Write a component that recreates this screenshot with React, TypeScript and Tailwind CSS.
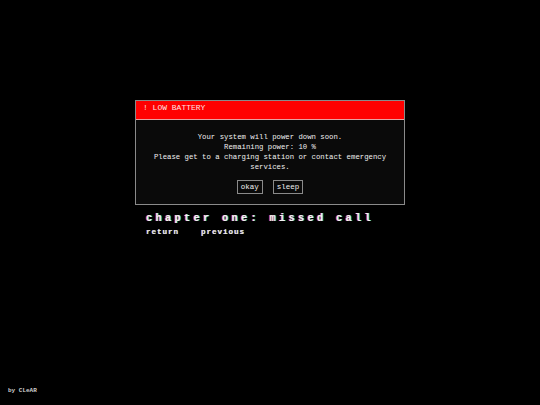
import React from "react";

const mono = { fontFamily: '"Liberation Mono", "DejaVu Sans Mono", monospace' };

const App: React.FC = () => {
    return (
        <div className="w-[540px] h-[405px] bg-black text-white relative overflow-hidden" style={mono}>
            <div className="flex flex-col items-center pt-[100px]">
                <div className="w-[270px] border border-[#8a8a8a] bg-[#0a0a0a]">
                    <div className="h-[19px] bg-[#ff0000] border-b border-[#e8a0a0] px-[7px] pt-[2px] text-[8px] leading-[10px] text-[#ffe0e0]">
                        ! LOW BATTERY
                    </div>
                    <div className="flex flex-col items-center pt-[12px] pb-[10px]">
                        <p className="text-[7.3px] leading-[10px] text-center text-[#f0f0f0] w-[244px]">
                            Your system will power down soon.
                            <br />
                            Remaining power: 10 %
                            <br />
                            Please get to a charging station or contact emergency services.
                        </p>
                        <div className="flex gap-[10px] mt-[8px]">
                            <button className="h-[14px] px-[3px] border border-[#8a8a8a] text-[7.5px] leading-[10px] text-[#f0f0f0]">
                                okay
                            </button>
                            <button className="h-[14px] px-[3px] border border-[#8a8a8a] text-[7.5px] leading-[10px] text-[#f0f0f0]">
                                sleep
                            </button>
                        </div>
                    </div>
                </div>
                <div className="w-[270px] pl-[11px] mt-[8px]">
                    <div
                        className="text-[10px] leading-[12px] font-bold tracking-[3.5px] text-[#f4f4f4]"
                        style={{ textShadow: "-1px 0 rgba(255,40,60,0.75), 1px 0 rgba(0,230,255,0.75)" }}
                    >
                        chapter one: missed call
                    </div>
                    <div
                        className="flex gap-[22px] mt-[2px] text-[7.5px] leading-[10px] font-bold tracking-[1px] text-[#eeeeee]"
                        style={{ textShadow: "-0.6px 0 rgba(255,40,60,0.6), 0.6px 0 rgba(0,230,255,0.6)" }}
                    >
                        <span>return</span>
                        <span>previous</span>
                    </div>
                </div>
            </div>
            <div className="absolute left-[8px] bottom-[10px] text-[6px] leading-[8px] font-bold text-[#cfcfcf]">
                by CLeAR
            </div>
        </div>
    );
};

export default App;
